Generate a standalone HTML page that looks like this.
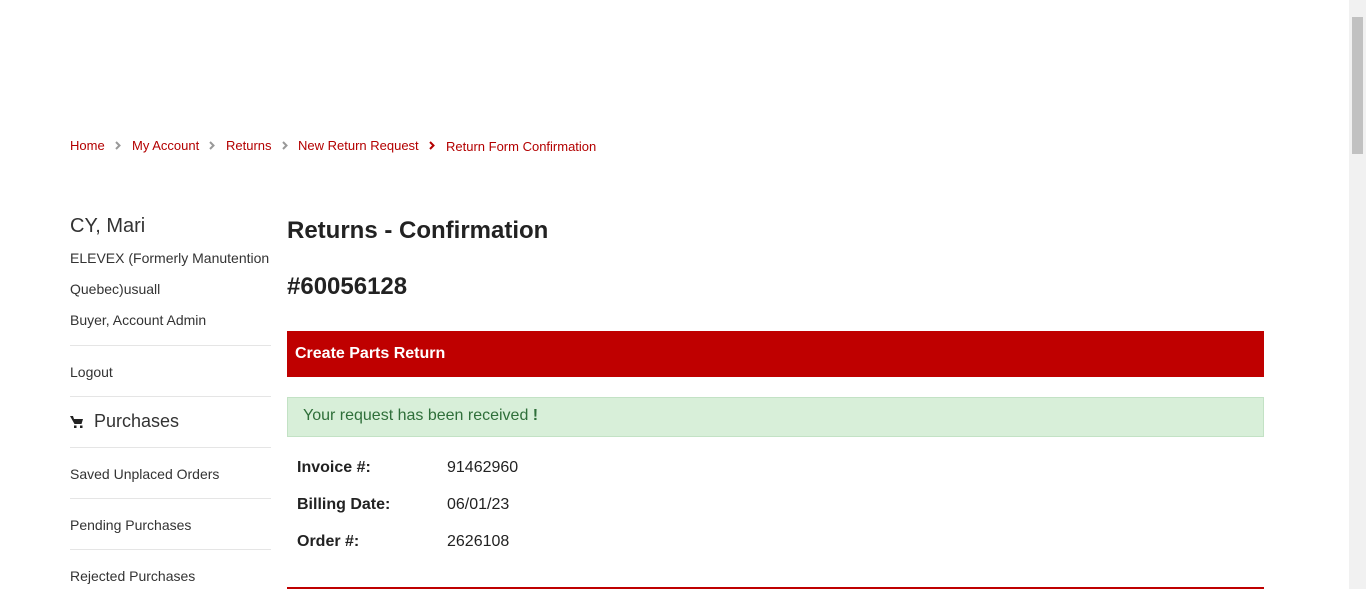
<!DOCTYPE html>
<html><head><style>
body{margin:0;width:1366px;height:589px;overflow:hidden;font-family:"Liberation Sans",sans-serif;color:#222;background:#fff;position:relative}
.a{position:absolute;white-space:nowrap}
.bc{top:138px;font-size:13px;color:#b30000}
.hr{position:absolute;left:70px;width:201px;height:1px;background:#e5e5e5}
.sb{font-size:14px;color:#333}
.scroll{position:absolute;right:0;top:0;width:17px;height:589px;background:#f1f1f1}
</style></head><body>
<div class="a bc" style="left:70px">Home</div>
<svg class="a" style="left:115px;top:141px" width="6" height="9"><path d="M1 1l3.5 3.5L1 8" stroke="#999" stroke-width="2" fill="none"/></svg>
<div class="a bc" style="left:132px">My Account</div>
<svg class="a" style="left:209px;top:141px" width="6" height="9"><path d="M1 1l3.5 3.5L1 8" stroke="#999" stroke-width="2" fill="none"/></svg>
<div class="a bc" style="left:226px">Returns</div>
<svg class="a" style="left:282px;top:141px" width="6" height="9"><path d="M1 1l3.5 3.5L1 8" stroke="#999" stroke-width="2" fill="none"/></svg>
<div class="a bc" style="left:298px">New Return Request</div>
<svg class="a" style="left:429px;top:141px" width="6" height="9"><path d="M1 1l3.5 3.5L1 8" stroke="#b30000" stroke-width="2" fill="none"/></svg>
<div class="a bc" style="left:446px;top:139px">Return Form Confirmation</div>

<div class="a" style="left:70px;top:215px;font-size:20px;color:#333">CY, Mari</div>
<div class="a sb" style="left:70px;top:250px">ELEVEX (Formerly Manutention</div>
<div class="a sb" style="left:70px;top:281px">Quebec)usuall</div>
<div class="a sb" style="left:70px;top:312px">Buyer, Account Admin</div>
<div class="hr" style="top:345px"></div>
<div class="a sb" style="left:70px;top:364px">Logout</div>
<div class="hr" style="top:396px"></div>
<svg class="a" style="left:70px;top:415px" width="14" height="14" viewBox="0 0 14 14"><path d="M0 1h3l1 3h9l-1.5 5H4.5z" fill="#222"/><rect x="4" y="10.5" width="2.5" height="2.5" fill="#222"/><rect x="10" y="10.5" width="2.5" height="2.5" fill="#222"/></svg>
<div class="a" style="left:94px;top:411px;font-size:18px;color:#333">Purchases</div>
<div class="hr" style="top:447px"></div>
<div class="a sb" style="left:70px;top:466px">Saved Unplaced Orders</div>
<div class="hr" style="top:498px"></div>
<div class="a sb" style="left:70px;top:517px">Pending Purchases</div>
<div class="hr" style="top:549px"></div>
<div class="a sb" style="left:70px;top:568px">Rejected Purchases</div>

<div class="a" style="left:287px;top:217px;font-size:24px;font-weight:bold">Returns - Confirmation</div>
<div class="a" style="left:287px;top:273px;font-size:24px;font-weight:bold">#60056128</div>
<div class="a" style="left:287px;top:331px;width:977px;height:46px;background:#bf0000"></div>
<div class="a" style="left:295px;top:345px;font-size:16px;font-weight:bold;color:#fff">Create Parts Return</div>
<div class="a" style="left:287px;top:397px;width:975px;height:38px;background:#d8efd9;border:1px solid #c3e2c5"></div>
<div class="a" style="left:303px;top:407px;font-size:16px;color:#2f6f3a">Your request has been received <b>!</b></div>
<div class="a" style="left:297px;top:459px;font-size:16px;font-weight:bold">Invoice #:</div>
<div class="a" style="left:447px;top:459px;font-size:16px">91462960</div>
<div class="a" style="left:297px;top:496px;font-size:16px;font-weight:bold">Billing Date:</div>
<div class="a" style="left:447px;top:496px;font-size:16px">06/01/23</div>
<div class="a" style="left:297px;top:533px;font-size:16px;font-weight:bold">Order #:</div>
<div class="a" style="left:447px;top:533px;font-size:16px">2626108</div>
<div class="a" style="left:287px;top:587px;width:977px;height:2px;background:#bf0000"></div>

<div class="scroll"><div style="position:absolute;left:3px;top:17px;width:11px;height:137px;background:#c1c1c1"></div></div>
</body></html>
